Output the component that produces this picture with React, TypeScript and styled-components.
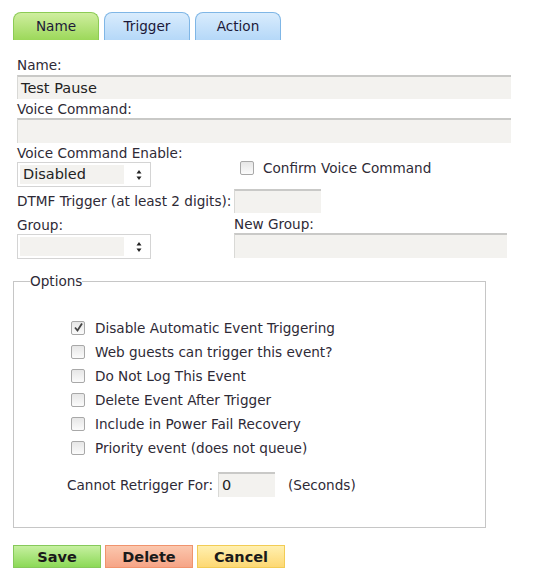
import React from 'react';
import styled, { createGlobalStyle } from 'styled-components';

const GlobalStyle = createGlobalStyle`
  body {
    margin: 0;
    background: #ffffff;
    font-family: "DejaVu Sans", Verdana, sans-serif;
    font-size: 13.6px;
    color: #2e2a36;
  }
`;

const Page = styled.div`
  width: 534px;
  height: 572px;
  padding: 12px 0 0 13px;
  box-sizing: border-box;
  overflow: hidden;
`;

const TabBar = styled.div`
  display: flex;
  gap: 5px;
`;

const tabColors = {
  green: { top: '#cfee9f', bottom: '#9cd85a', border: '#8ccb55' },
  blue: { top: '#d9ecfd', bottom: '#b5d8f8', border: '#7fb6e6' },
};

const Tab = styled.div<{ $tone: 'green' | 'blue' }>`
  width: 86px;
  height: 28px;
  box-sizing: border-box;
  border: 1px solid ${(p) => tabColors[p.$tone].border};
  border-bottom: none;
  border-radius: 8px 8px 0 0;
  background: linear-gradient(${(p) => tabColors[p.$tone].top}, ${(p) => tabColors[p.$tone].bottom});
  display: flex;
  align-items: center;
  justify-content: center;
  padding-bottom: 2px;
  color: #1c1838;
  font-size: 13.6px;
`;

const Form = styled.div`
  padding: 17px 0 0 4px;
`;

const Label = styled.div`
  line-height: 17px;
  height: 17px;
  white-space: nowrap;
`;

const TextField = styled.div<{ $width: number; $height?: number }>`
  width: ${(p) => p.$width}px;
  height: ${(p) => p.$height ?? 24}px;
  box-sizing: border-box;
  background: #f3f2ef;
  border-top: 2px solid #c9c9c7;
  border-left: 1px solid #d9d9d6;
  padding: 2px 0 0 3px;
  font-size: 14.5px;
  line-height: 18px;
  color: #222;
`;

const SelectBox = styled.div`
  width: 134px;
  height: 25px;
  box-sizing: border-box;
  border: 1px solid #d4d4d4;
  display: flex;
  align-items: center;
  padding: 2px 8px 2px 2px;
  gap: 12px;
`;

const SelectValue = styled.div`
  flex: 1;
  height: 19px;
  background: #f3f2ef;
  padding-left: 3px;
  font-size: 14.5px;
  line-height: 19px;
  color: #222;
`;

const Arrows = () => (
  <svg width="6" height="12" viewBox="0 0 6 12">
    <path d="M3 1 L5.5 4.5 L0.5 4.5 Z" fill="#222" />
    <path d="M3 11 L5.5 7.5 L0.5 7.5 Z" fill="#222" />
  </svg>
);

const Select = ({ value }: { value?: string }) => (
  <SelectBox>
    <SelectValue>{value}</SelectValue>
    <Arrows />
  </SelectBox>
);

const Grid = styled.div<{ $mt?: number; $center?: boolean }>`
  display: grid;
  grid-template-columns: 217px 1fr;
  margin-top: ${(p) => p.$mt ?? 0}px;
  align-items: ${(p) => (p.$center ? 'center' : 'start')};
`;

const Cell = styled.div<{ $mt?: number; $ml?: number }>`
  margin-top: ${(p) => p.$mt ?? 0}px;
  margin-left: ${(p) => p.$ml ?? 0}px;
`;

const Inline = styled.div<{ $gap?: number }>`
  display: flex;
  align-items: center;
  gap: ${(p) => p.$gap ?? 10}px;
`;

const Box = styled.span`
  width: 14px;
  height: 14px;
  box-sizing: border-box;
  border: 1px solid #a8a8a8;
  border-radius: 2px;
  background: linear-gradient(#e6e6e6, #fbfbfb);
  display: inline-flex;
  align-items: center;
  justify-content: center;
  flex: none;
`;

const Checkbox = ({ checked }: { checked?: boolean }) => (
  <Box>
    {checked && (
      <svg width="11" height="11" viewBox="0 0 11 11">
        <path d="M2 5.5 L4.5 8.5 L9 1.5" stroke="#444" strokeWidth="1.8" fill="none" />
      </svg>
    )}
  </Box>
);

const Fieldset = styled.fieldset`
  width: 473px;
  height: 247px;
  box-sizing: border-box;
  margin: 22px 0 0 -4px;
  padding: 37px 0 0 57px;
  border: 1px solid #c6c6c6;
  position: relative;
`;

const Legend = styled.legend`
  padding: 0;
  position: absolute;
  top: -9px;
  left: 16px;
  background: #fff;
  line-height: 17px;
`;

const OptionList = styled.div`
  display: flex;
  flex-direction: column;
  gap: 7px;
`;

const OptionRow = styled.div`
  display: flex;
  align-items: center;
  gap: 10px;
  height: 17px;
`;

const Retrigger = styled.div`
  display: flex;
  align-items: center;
  margin: 16px 0 0 -4px;
`;

const Buttons = styled.div`
  display: flex;
  gap: 4px;
  margin: 17px 0 0 -4px;
`;

const btnColors = {
  save: { top: '#c6f0a0', bottom: '#8cd957', border: '#86c95a' },
  delete: { top: '#fbc7ae', bottom: '#f6a486', border: '#f0936d' },
  cancel: { top: '#fff0b0', bottom: '#fdd873', border: '#f2cc55' },
};

const Button = styled.div<{ $kind: 'save' | 'delete' | 'cancel' }>`
  width: 88px;
  height: 23px;
  box-sizing: border-box;
  border: 1px solid ${(p) => btnColors[p.$kind].border};
  background: linear-gradient(${(p) => btnColors[p.$kind].top}, ${(p) => btnColors[p.$kind].bottom});
  display: flex;
  align-items: center;
  justify-content: center;
  font-weight: bold;
  font-size: 14.5px;
  color: #1a1a1a;
`;

const options = [
  { text: 'Disable Automatic Event Triggering', checked: true },
  { text: 'Web guests can trigger this event?' },
  { text: 'Do Not Log This Event' },
  { text: 'Delete Event After Trigger' },
  { text: 'Include in Power Fail Recovery' },
  { text: 'Priority event (does not queue)' },
];

export default function App() {
  return (
    <>
      <GlobalStyle />
      <Page>
        <TabBar>
          <Tab $tone="green">Name</Tab>
          <Tab $tone="blue">Trigger</Tab>
          <Tab $tone="blue">Action</Tab>
        </TabBar>
        <Form>
          <Label>Name:</Label>
          <Cell $mt={1}>
            <TextField $width={494}>Test Pause</TextField>
          </Cell>
          <Cell $mt={2}>
            <Label>Voice Command:</Label>
          </Cell>
          <TextField $width={494} $height={25} />
          <Grid $mt={2}>
            <Cell>
              <Label>Voice Command Enable:</Label>
              <Select value="Disabled" />
            </Cell>
            <Cell $mt={15} $ml={6}>
              <Inline $gap={9}>
                <Checkbox />
                <span>Confirm Voice Command</span>
              </Inline>
            </Cell>
          </Grid>
          <Grid $mt={2} $center>
            <Label>DTMF Trigger (at least 2 digits):</Label>
            <TextField $width={87} />
          </Grid>
          <Grid $mt={3}>
            <Cell $mt={1}>
              <Label>Group:</Label>
              <Select />
            </Cell>
            <Cell>
              <Label>New Group:</Label>
              <TextField $width={273} $height={25} />
            </Cell>
          </Grid>
          <Fieldset>
            <Legend>Options</Legend>
            <OptionList>
              {options.map((o) => (
                <OptionRow key={o.text}>
                  <Checkbox checked={o.checked} />
                  <span>{o.text}</span>
                </OptionRow>
              ))}
            </OptionList>
            <Retrigger>
              <span>Cannot Retrigger For:</span>
              <Cell $ml={5}>
                <TextField $width={57} $height={25}>0</TextField>
              </Cell>
              <Cell $ml={13}>(Seconds)</Cell>
            </Retrigger>
          </Fieldset>
          <Buttons>
            <Button $kind="save">Save</Button>
            <Button $kind="delete">Delete</Button>
            <Button $kind="cancel">Cancel</Button>
          </Buttons>
        </Form>
      </Page>
    </>
  );
}
